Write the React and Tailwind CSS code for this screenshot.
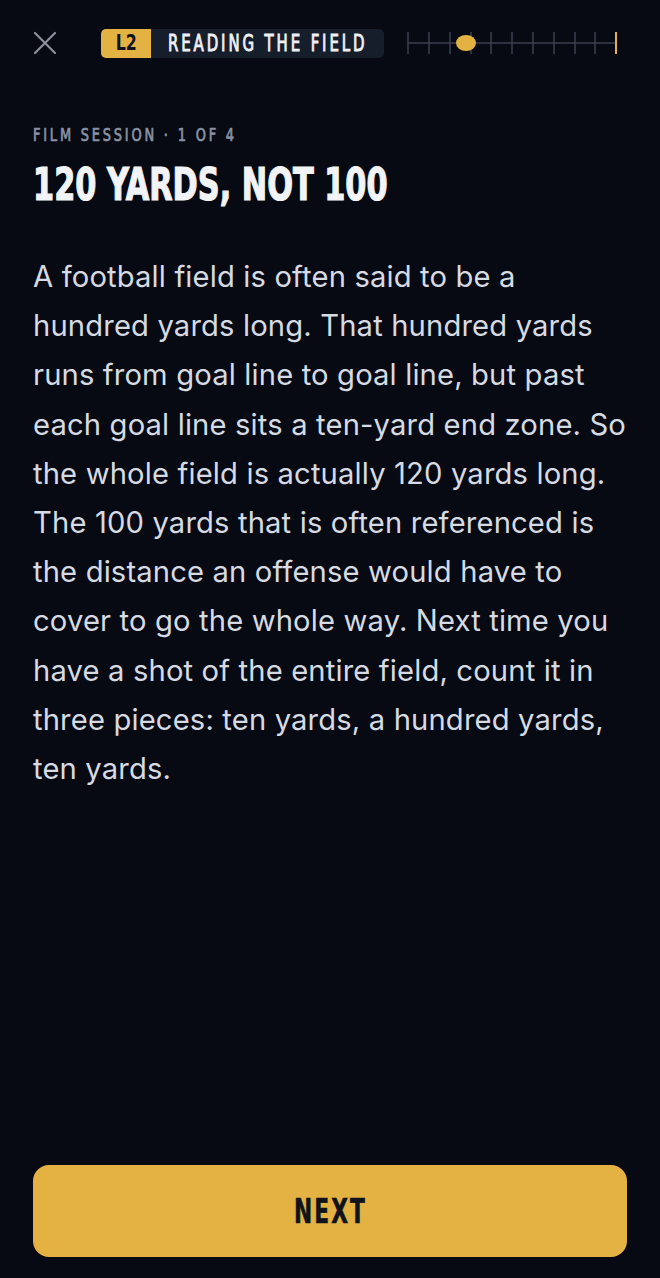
import React from "react";

const COND = { fontFamily: '"DejaVu Sans Condensed", "DejaVu Sans", sans-serif' };

const BODY =
  "A football field is often said to be a hundred yards long. That hundred yards runs from goal line to goal line, but past each goal line sits a ten-yard end zone. So the whole field is actually 120 yards long. The 100 yards that is often referenced is the distance an offense would have to cover to go the whole way. Next time you have a shot of the entire field, count it in three pieces: ten yards, a hundred yards, ten yards.";

/* yard-line progress track */
function Track() {
  const ticks = [2, 23, 44, 65, 85, 106, 127, 148, 169, 189];
  return (
    <svg width="214" height="28" viewBox="0 0 214 28" className="block">
      <line x1="2" y1="14" x2="210" y2="14" stroke="#3a4150" strokeWidth="1.5" />
      {ticks.map((x) => (
        <line key={x} x1={x} y1="3" x2={x} y2="25" stroke="#3a4150" strokeWidth="1.5" />
      ))}
      <line x1="210" y1="3" x2="210" y2="25" stroke="#e3b242" strokeWidth="2" />
      <ellipse cx="60" cy="14" rx="10" ry="8" fill="#e3b242" />
    </svg>
  );
}

export default function App() {
  return (
    <div className="flex min-h-[1278px] w-full flex-col bg-[#070a13] px-[33px]">
      {/* top bar */}
      <div className="flex h-[86px] items-center">
        <svg width="24" height="24" viewBox="0 0 24 24" className="shrink-0">
          <path d="M2 2 L22 22 M22 2 L2 22" stroke="#8a909c" strokeWidth="2.2" strokeLinecap="round" />
        </svg>

        <div className="ml-[44px] flex h-[29px] w-[283px] shrink-0 overflow-hidden rounded-[5px] bg-[#161e2c]">
          <div className="flex w-[50px] items-center justify-center bg-[#e3b242] text-[#10131a]" style={COND}>
            <span className="inline-block scale-x-[0.8] text-[22px] font-bold leading-none">L2</span>
          </div>
          <div className="flex flex-1 items-center overflow-hidden pl-[17px]" style={COND}>
            <span className="inline-block origin-left scale-x-[0.722] whitespace-nowrap text-[23px] font-normal leading-none tracking-[4px] text-[#eef0f4] [-webkit-text-stroke:0.9px_#eef0f4]">
              READING THE FIELD
            </span>
          </div>
        </div>

        <div className="ml-[22px]">
          <Track />
        </div>
      </div>

      {/* lesson content */}
      <div className="mt-[35px] whitespace-nowrap" style={COND}>
        <span className="inline-block origin-left scale-x-[0.8] text-[18px] font-normal tracking-[3.5px] text-[#8a93a3] [-webkit-text-stroke:0.7px_#8a93a3]">
          FILM SESSION · 1 OF 4
        </span>
      </div>
      <h1 className="mt-[10px] whitespace-nowrap leading-[54px]" style={COND}>
        <span className="inline-block origin-left scale-x-[0.767] text-[44px] font-bold text-[#f1f3f6] [-webkit-text-stroke:1.2px_#f1f3f6]">
          120 YARDS, NOT 100
        </span>
      </h1>

      <p
        className="mt-[30px] text-[29.2px] leading-[49.2px] tracking-[0.15px] text-[#d6dae2]"
        style={{ fontFamily: "Inter, sans-serif" }}
      >
        {BODY}
      </p>

      <div className="flex-1" />

      {/* next */}
      <button
        className="mb-[21px] flex h-[92px] w-full items-center justify-center rounded-[16px] bg-[#e3b242] text-[#10131a]"
        style={COND}
      >
        <span className="inline-block scale-x-[0.71] text-[34px] font-bold tracking-[3px] [-webkit-text-stroke:0.6px_#10131a]">
          NEXT
        </span>
      </button>
    </div>
  );
}
